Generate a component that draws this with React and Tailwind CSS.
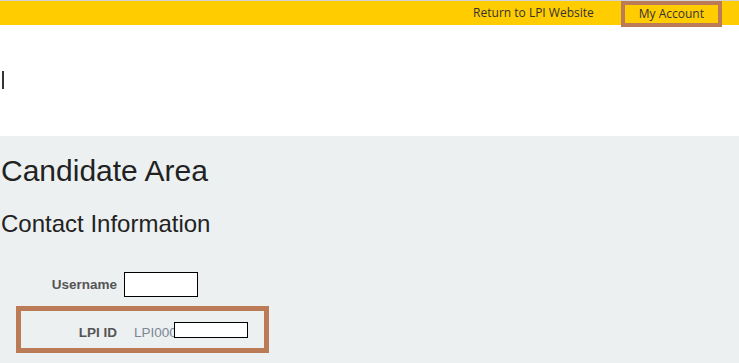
export default function App() {
    return (
        <div className="min-h-[363px] w-full bg-white font-['Liberation_Sans',Arial,sans-serif] text-[#222]">
            {/* Top utility bar */}
            <div className="border-t border-[#d4d4d4]">
                <nav className="flex h-6 items-start justify-end bg-[#ffcc00] pr-[17px] font-['Open_Sans',sans-serif] text-[12px] text-[#333]">
                    <a href="#" className="mt-[4px] leading-4">Return to LPI Website</a>
                    <a href="#" className="relative z-10 ml-[27px] h-[26px] border-4 border-[#bb7b56] bg-[#ffcc00] px-[14px] leading-[17px]">
                        My Account
                    </a>
                </nav>
            </div>

            {/* Logo area (image not loaded) */}
            <header className="h-[111px] pl-[2px] pt-[46px]">
                <div className="h-[18px] w-[2px] bg-[#333]"></div>
            </header>

            {/* Main */}
            <main className="bg-[#ecf0f1] pb-6 pl-px">
                <h1 className="pt-[18px] text-[30px] leading-[33px] text-[#222]">Candidate Area</h1>
                <h2 className="mt-[24px] text-[24px] leading-[26.4px] text-[#222]">Contact Information</h2>

                <div className="mt-[35px] flex items-center">
                    <label className="w-[116px] text-right text-[13.5px] font-bold text-[#555]">Username</label>
                    <div className="ml-[7px] h-[25px] w-[74px] border border-black bg-white"></div>
                </div>

                <div className="ml-[15px] mt-[9px] w-[253px] border-[5px] border-[#bb7b56] pb-[7px] pt-[14px]">
                    <div className="flex h-4 items-center">
                        <span className="w-[96px] text-right text-[13.5px] font-bold text-[#555]">LPI ID</span>
                        <span className="relative ml-[17px] text-[13.5px] text-[#7b8794]">
                            LPI000
                            <span className="absolute left-[40px] top-[-1px] h-4 w-[74px] border border-black bg-white"></span>
                        </span>
                    </div>
                </div>
            </main>
        </div>
    );
}
